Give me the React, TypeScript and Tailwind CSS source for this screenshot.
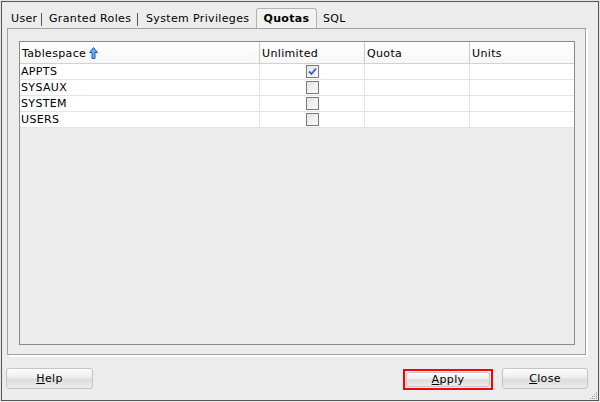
import React from 'react';

const rows = [
  { name: 'APPTS', unlimited: true },
  { name: 'SYSAUX', unlimited: false },
  { name: 'SYSTEM', unlimited: false },
  { name: 'USERS', unlimited: false },
];

const SortUp = () => (
  <svg width="9" height="12" viewBox="0 0 9 12" className="ml-[3px] -mt-[2px]">
    <path d="M4.5 0.5 L8.5 5.5 L6 5.5 L6 11.5 L3 11.5 L3 5.5 L0.5 5.5 Z" fill="#6fa8f0" stroke="#1f5fbf" strokeWidth="1" />
  </svg>
);

const Checkbox = ({ checked }: { checked: boolean }) => (
  <div className="w-[13px] h-[13px] border border-[#7a7a7a] bg-gradient-to-br from-[#e6e6e6] to-[#fbfbfb] flex items-center justify-center">
    {checked && (
      <svg width="9" height="9" viewBox="0 0 9 9">
        <path d="M1 4.5 L3.5 7 L8 1.5" fill="none" stroke="#2f62c9" strokeWidth="1.8" />
      </svg>
    )}
  </div>
);

const Button = ({ label, className = '' }: { label: string; className?: string }) => (
  <button className={`h-[21px] pt-px border border-[#c4c4c4] rounded-[3px] bg-[linear-gradient(to_bottom,#fdfdfd,#eeeeee_45%,#dcdcdc_55%,#ececec)] text-[11px] text-black flex items-center justify-center ${className}`}>
    <span className="underline">{label[0]}</span>
    {label.slice(1)}
  </button>
);

export default function App() {
  return (
    <div className="w-[600px] h-[402px] bg-[#e6e6e6] p-px font-['DejaVu_Sans',sans-serif] text-[11px] tracking-[0.35px] text-black whitespace-nowrap">
      <div className="w-[598px] h-[400px] border border-[#555555] bg-[#ececec] flex flex-col relative">
        {/* tabs */}
        <div className="mt-[6px] h-[20px] flex items-stretch">
          <span className="ml-[9px] w-[30px] flex items-center pt-[2px]">User</span>
          <span className="w-px h-[13px] bg-[#555] self-center mt-[2px]" />
          <span className="ml-[7px] w-[82px] flex items-center pt-[2px]">Granted Roles</span>
          <span className="ml-[6px] w-px h-[13px] bg-[#555] self-center mt-[2px]" />
          <span className="ml-[8px] w-[102px] flex items-center pt-[2px]">System Privileges</span>
          <span className="ml-[8px] w-[61px] pt-[2px] border border-b-0 border-[#b4b4b4] rounded-t-[3px] bg-[#f2f2f2] flex items-center justify-center font-bold">
            Quotas
          </span>
          <span className="ml-[6px] flex items-center pt-[2px]">SQL</span>
        </div>

        {/* panel */}
        <div className="ml-[5px] w-[579px] h-[327px] border border-[#a0a0a0] shadow-[2px_2px_0_#ffffff] pt-[12px] pl-[11px] pr-[10px] pb-[9px]">
          <div className="w-full h-full border border-[#8a8a8a] bg-[#ececec] flex flex-col">
            <div className="flex h-[22px] bg-gradient-to-b from-white to-[#f7f7f7] border-b border-[#d2d2d2]">
              <div className="w-[240px] border-r border-[#c8c8c8] flex items-center pl-[2px] pt-[3px]">
                Tablespace
                <SortUp />
              </div>
              <div className="w-[105px] border-r border-[#c8c8c8] flex items-center pl-[2px] pt-[3px]">Unlimited</div>
              <div className="w-[105px] border-r border-[#c8c8c8] flex items-center pl-[2px] pt-[3px]">Quota</div>
              <div className="flex-1 flex items-center pl-[2px] pt-[3px]">Units</div>
            </div>
            {rows.map((r) => (
              <div key={r.name} className="flex h-[16px] bg-white border-b border-[#e4e4e4]">
                <div className="w-[240px] border-r border-[#e4e4e4] flex items-center pl-px pt-[2px]">{r.name}</div>
                <div className="w-[105px] border-r border-[#e4e4e4] flex items-center justify-center">
                  <Checkbox checked={r.unlimited} />
                </div>
                <div className="w-[105px] border-r border-[#e4e4e4]" />
                <div className="flex-1" />
              </div>
            ))}
          </div>
        </div>

        {/* buttons */}
        <div className="mt-[13px] flex items-start">
          <Button label="Help" className="ml-[4px] w-[87px]" />
          <div className="ml-auto mt-px w-[90px] h-[21px] border-2 border-[#ff0000] p-px flex">
            <Button label="Apply" className="w-full !h-full" />
          </div>
          <Button label="Close" className="ml-[9px] mr-[10px] w-[86px]" />
        </div>

        {/* resize grip */}
        <svg width="10" height="10" viewBox="0 0 10 10" className="absolute right-0 bottom-0">
          <g fill="#9a9a9a">
            <rect x="8" y="2" width="1" height="1" />
            <rect x="6" y="4" width="1" height="1" />
            <rect x="8" y="4" width="1" height="1" />
            <rect x="4" y="6" width="1" height="1" />
            <rect x="6" y="6" width="1" height="1" />
            <rect x="8" y="6" width="1" height="1" />
            <rect x="2" y="8" width="1" height="1" />
            <rect x="4" y="8" width="1" height="1" />
            <rect x="6" y="8" width="1" height="1" />
            <rect x="8" y="8" width="1" height="1" />
          </g>
        </svg>
      </div>
    </div>
  );
}
